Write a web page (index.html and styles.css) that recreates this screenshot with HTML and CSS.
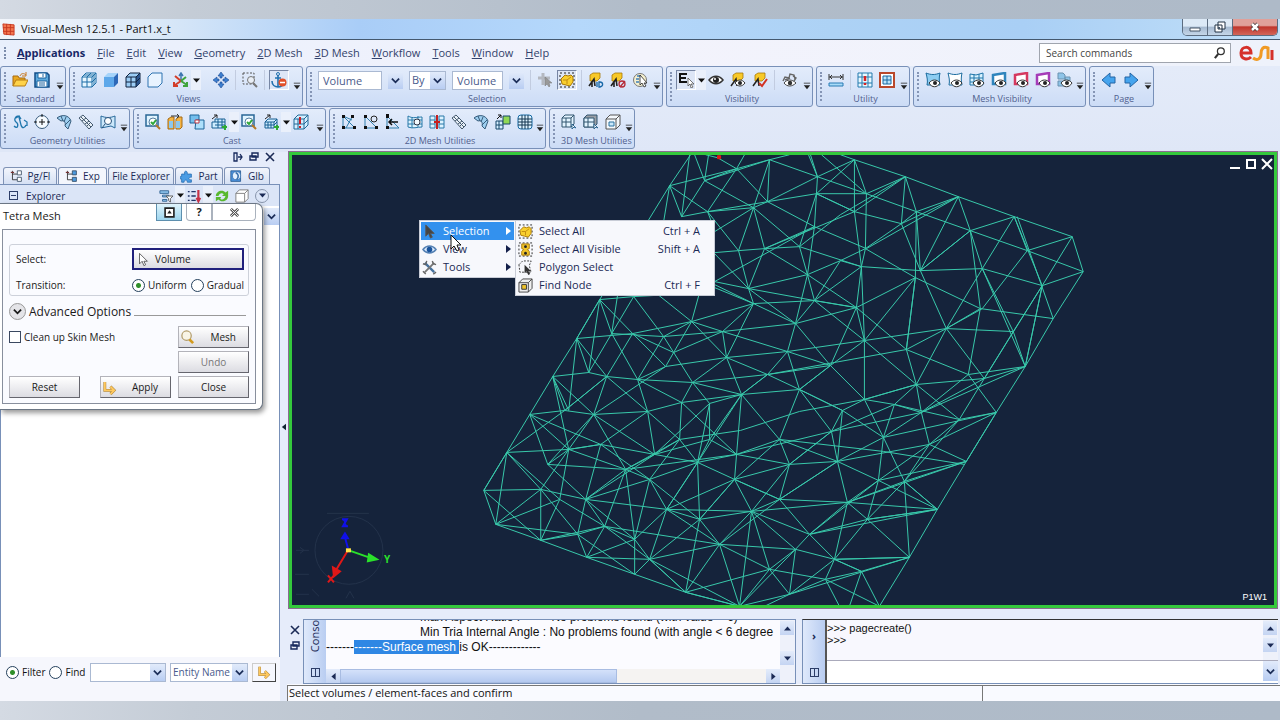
FILE: index.html
```html
<!DOCTYPE html>
<html lang="en">
  <head>
    <meta charset="UTF-8">
    <meta name="viewport" content="width=device-width, initial-scale=1.0">
    <title>Visual-Mesh 12.5.1 - Part1.x_t</title>
    <link rel="stylesheet" href="styles.css">
  </head>

  <body>
    <!-- Icon sprite -->
    <svg class="sprite" aria-hidden="true">
      <symbol id="open" viewBox="0 0 16 16"><path d="M1 14V4h5l1 2h6v3" fill="#e9a820" stroke="#a86a10"/><path d="M1 14l3-6h12l-3 6z" fill="#ffd34a" stroke="#b67c14"/><path d="M8 4c1-3 4-3 6-1M14 0v4h-4" fill="none" stroke="#c87820"/></symbol>
      <symbol id="save" viewBox="0 0 16 16"><path d="M1 1h12l2 2v12H1z" fill="#5da9dc" stroke="#124c86" stroke-width="1.5"/><path d="M4 1h8v5H4zM3 9h10v6H3z" fill="#fff" stroke="#1d64a0"/><path d="M9 2v3M5 11h6M5 13h6" stroke="#1d64a0"/></symbol>
      <symbol id="cube-wire" viewBox="0 0 16 16"><path d="M1 5l4-4h10v10l-4 4H1zM1 5h10v10M11 5l4-4M6 5v10M1 10h10l4-4M3 3h10v10M6 5l4-4" fill="#e6f6ff" stroke="#1b6da6"/></symbol>
      <symbol id="cube-solid" viewBox="0 0 16 16"><path d="M1 5h10v10H1z" fill="#5ea8ea"/><path d="M1 5l4-4h10l-4 4z" fill="#a6d4fa"/><path d="M11 5l4-4v10l-4 4z" fill="#2d68b8"/></symbol>
      <symbol id="cube-edge" viewBox="0 0 16 16"><path d="M1 5l4-4h10v10l-4 4H1z" fill="#9ccdf5" stroke="#10233e"/><path d="M11 5l4-4v10l-4 4z" fill="#2b548c"/><path d="M1 5h10v10M11 5l4-4M6 5v10M1 10h10l4-4" fill="none" stroke="#10233e"/></symbol>
      <symbol id="cube-outline" viewBox="0 0 16 16"><path d="M1 5l4-4h10v10l-4 4H1z" fill="#e8f3ff" stroke="#2c72b0"/></symbol>
      <symbol id="axes" viewBox="0 0 16 16"><path d="M8 9V2M6 4l2-3 2 3" fill="none" stroke="#3d76b0" stroke-width="1.5"/><path d="M8 9l-6 4M1 10v4h4M8 9L2 4" fill="none" stroke="#d33d2a" stroke-width="2"/><path d="M8 9l6 4M14 10v4h-4M8 9l5-4" fill="none" stroke="#3ea43c" stroke-width="2"/></symbol>
      <symbol id="move" viewBox="0 0 16 16"><path d="M8 0l3 4H9v2H7V4H5zM8 16l3-4H9v-2H7v2H5zM0 8l4-3v2h2v2H4v2zM16 8l-4-3v2h-2v2h2v2z" fill="#3d7fd0" stroke="#1c4c94" stroke-width=".6"/></symbol>
      <symbol id="zoom-box" viewBox="0 0 16 16"><path d="M1 1h11v11H1z" fill="none" stroke="#555" stroke-dasharray="2 1.5"/><circle cx="9" cy="8" r="3.5" fill="#e9eef5" stroke="#777"/><path d="M11 11l4 4" stroke="#777" stroke-width="2"/></symbol>
      <symbol id="anchor" viewBox="0 0 16 16"><path d="M7 3v12M4 6h6M1 9c0 4 3 6 6 6s5-2 6-5" fill="none" stroke="#2271ae" stroke-width="1.6"/><circle cx="7" cy="2" r="1.5" fill="none" stroke="#2271ae"/><circle cx="11.5" cy="10.5" r="4" fill="#e2502a"/><path d="M9 10.5h5" stroke="#fff" stroke-width="1.5"/></symbol>
      <symbol id="pick-off" viewBox="0 0 16 16"><path d="M6 1v12M1 6h12" stroke="#b4b8c0" stroke-width="3"/><path d="M8 5v9l2-2 2 3 1-1-1-3h3z" fill="#999" stroke="#777" stroke-width=".5"/></symbol>
      <symbol id="select-all" viewBox="0 0 16 16"><path d="M1 1h14v14H1z" fill="none" stroke="#222" stroke-dasharray="2 2"/><path d="M2 7l4-4 3 1 3-1 2 2v5l-3 4-4-1-4-1z" fill="#f9cf2e" stroke="#a97908"/><path d="M4 8h4v4M8 8l4-3" fill="none" stroke="#c28c10"/></symbol>
      <symbol id="box-id" viewBox="0 0 16 16"><path d="M2 3l3-2h7v5l-3 3H2z" fill="#f8c928" stroke="#a77808" stroke-width=".8"/><path d="M1 14l5-7 1 7M4 9v6" stroke="#222" stroke-width="1.6" fill="none"/><path d="M9 10v5M11 10v5h1c4-1 3-5 0-5z" fill="none" stroke="#1768a8" stroke-width="1.3"/></symbol>
      <symbol id="box-pick" viewBox="0 0 16 16"><path d="M2 3l3-2h7v5l-3 3H2z" fill="#f8c928" stroke="#a77808" stroke-width=".8"/><path d="M1 14l5-7 1 7M4 9v6" stroke="#222" stroke-width="1.6" fill="none"/><circle cx="12" cy="12" r="3" fill="none" stroke="#b52b38" stroke-width="1.3"/><path d="M10 15l5-6" stroke="#b52b38" stroke-width="1.3"/></symbol>
      <symbol id="circle-pick" viewBox="0 0 16 16"><circle cx="8" cy="8" r="6.5" fill="#f5f0cf" stroke="#777"/><path d="M5 4h4M4 7h3M4 10h3" stroke="#6b9bc0" stroke-width="2"/><path d="M8 3v10l2-2 2 4 2-1-2-3h3z" fill="#fff" stroke="#222" stroke-width=".8"/></symbol>
      <symbol id="e-pick" viewBox="0 0 16 16"><path d="M9 2H2v8h7M2 6h6" fill="none" stroke="#111" stroke-width="2"/><path d="M10 6v8l2-2 1 4 2-1-2-3h3z" fill="#fff" stroke="#555" stroke-width=".8"/></symbol>
      <symbol id="eye" viewBox="0 0 16 16"><path d="M1 8c4-5 10-5 14 0-4 5-10 5-14 0z" fill="#fff" stroke="#333" stroke-width="1.5"/><circle cx="8" cy="8" r="3" fill="#222"/><circle cx="7" cy="7" r="1" fill="#fff"/></symbol>
      <symbol id="box-eye" viewBox="0 0 16 16"><path d="M3 3l3-2h7v5l-3 3H3z" fill="#f8c928" stroke="#a77808" stroke-width=".8"/><path d="M1 14l5-7 1 7" stroke="#222" stroke-width="1.5" fill="none"/><path d="M5 11c3-4 7-4 10 0-3 4-7 4-10 0z" fill="#fff" stroke="#333"/><circle cx="10" cy="11" r="2" fill="#222"/></symbol>
      <symbol id="box-check" viewBox="0 0 16 16"><path d="M3 3l3-2h7v5l-3 3H3z" fill="#f8c928" stroke="#a77808" stroke-width=".8"/><path d="M1 14l5-7 1 7" stroke="#222" stroke-width="1.5" fill="none"/><path d="M7 11l3 3 5-7" fill="none" stroke="#d23324" stroke-width="2"/></symbol>
      <symbol id="eye-cycle" viewBox="0 0 16 16"><path d="M2 9l2-4 4 1 1-4 4 1 1 4M12 4l3 2-2 3M4 8l5-2" fill="none" stroke="#666" stroke-width="1.4"/><path d="M3 11c3-4 8-4 12 0-4 4-9 4-12 0z" fill="#fff" stroke="#444"/><circle cx="9" cy="11" r="2.2" fill="#333"/></symbol>
      <symbol id="measure" viewBox="0 0 16 16"><path d="M1 5h14M1 2v6M15 2v6M4 3L2 5l2 2M12 3l2 2-2 2" fill="none" stroke="#333"/><path d="M1 11h14v3H1z" fill="#a9dcf8" stroke="#287bb4"/></symbol>
      <symbol id="grid-alert" viewBox="0 0 16 16"><path d="M1 1h14v14H1zM5 1v14M11 1v14M1 5h14M1 11h14" fill="#e8f8ff" stroke="#247bae"/><path d="M8 4v5M8 11v2" stroke="#d42222" stroke-width="2.5"/></symbol>
      <symbol id="grid-frame" viewBox="0 0 16 16"><path d="M1 1h14v14H1z" fill="#fff" stroke="#b9482b" stroke-width="2"/><path d="M4 4h8v8H4zM4 8h8M8 4v8" fill="#bde5fb" stroke="#1769a3"/></symbol>
      <symbol id="grid-round" viewBox="0 0 16 16"><rect x="1" y="1" width="14" height="14" rx="3" fill="#dff3ff" stroke="#176ba5"/><path d="M5 1v14M8 1v14M11 1v14M1 5h14M1 8h14M1 11h14" stroke="#12354f"/></symbol>
      <symbol id="shape-eye" viewBox="0 0 16 16"><path d="M1 1c5 2 9 2 14 0-1 4-1 8 0 12H2c1-4 0-8-1-12z" fill="currentColor" stroke="#1b6c9f"/><path d="M4 11c3-4 8-4 11 0-3 5-8 5-11 0z" fill="#fff" stroke="#333"/><circle cx="10" cy="11" r="2" fill="#222"/></symbol>
      <symbol id="frame-eye" viewBox="0 0 16 16"><path d="M2 3l12-2v11H2z" fill="#fff" stroke="currentColor" stroke-width="2.5"/><path d="M4 11c3-4 8-4 11 0-3 5-8 5-11 0z" fill="#fff" stroke="#333"/><circle cx="10" cy="11" r="2" fill="#222"/></symbol>
      <symbol id="mesh-eye" viewBox="0 0 16 16"><path d="M1 2l6 1 7-2v12H1zM1 6h13M1 10h13M5 2v11M10 2v11" fill="#d8f2ff" stroke="#1e75a9"/><path d="M4 11c3-4 8-4 11 0-3 5-8 5-11 0z" fill="#fff" stroke="#333"/><circle cx="10" cy="11" r="2" fill="#222"/></symbol>
      <symbol id="docs-eye" viewBox="0 0 16 16"><path d="M1 1h5l2 2v4H1zM8 5h5v5H8zM1 9h6v5H1z" fill="#8ec4e8" stroke="#6a92b0"/><path d="M4 11c3-4 8-4 11 0-3 5-8 5-11 0z" fill="#fff" stroke="#333"/><circle cx="10" cy="11" r="2" fill="#222"/></symbol>
      <symbol id="prev" viewBox="0 0 16 16"><path d="M1 8l8-7v4h5v6H9v4z" fill="#45a4ee" stroke="#2464a4"/></symbol>
      <symbol id="next" viewBox="0 0 16 16"><path d="M15 8L7 1v4H2v6h5v4z" fill="#45a4ee" stroke="#2464a4"/></symbol>
      <symbol id="curve" viewBox="0 0 16 16"><path d="M2 12c4 4 5-2 2-4-3-3 1-8 3-5l2 8c1 4 4 3 5 0M4 4l3-2 2 3M12 6l3 2v4" fill="none" stroke="#2077ad" stroke-width="1.3"/></symbol>
      <symbol id="circle-node" viewBox="0 0 16 16"><circle cx="8" cy="8" r="6.5" fill="#f6fbff" stroke="#365a7a"/><path d="M8 5v6M5 8h6M8 0v3M0 8h3M13 8h3" stroke="#111"/></symbol>
      <symbol id="surface" viewBox="0 0 16 16"><path d="M1 4c5-4 12-3 14 3l-3 8-3-3c1-4-1-6-4-5z" fill="#9ecff0" stroke="#365c7c"/><path d="M5 2l2 5M10 3L8 8M14 6l-5 5" stroke="#365c7c"/></symbol>
      <symbol id="strip" viewBox="0 0 16 16"><path d="M1 4l4-3 10 10-4 4z" fill="#e8f0f7" stroke="#44596f"/><path d="M4 7l4-3M7 10l4-3M9 12l3-3M3 3l10 10" stroke="#44596f"/></symbol>
      <symbol id="lens-shape" viewBox="0 0 16 16"><path d="M1 2c5 2 9 2 14 0v12l-4-2-10 2z" fill="#cbe8fb" stroke="#27699a"/><circle cx="8" cy="7" r="3.5" fill="#fff" stroke="#27517a"/><path d="M5 10l-3 4" stroke="#27517a"/></symbol>
      <symbol id="check-lens" viewBox="0 0 16 16"><path d="M1 1h12v11H1z" fill="#e1f4ff" stroke="#2a6796" stroke-width="1.5"/><circle cx="8" cy="8" r="4" fill="#fff" stroke="#557ea0"/><path d="M6 8l2 2 3-4" fill="none" stroke="#2fa83a" stroke-width="2"/><path d="M11 11l4 4" stroke="#b57826" stroke-width="2"/></symbol>
      <symbol id="cast-box" viewBox="0 0 16 16"><path d="M1 5l3-2h3v12H1zM9 5l3-2h3v10l-2 2H9z" fill="#f4b343" stroke="#a46b16"/><path d="M2 7h4v7H2zM9 7h4v7H9z" fill="#8cc7ee"/><path d="M4 2h8M10 0l2 2-2 2" fill="none" stroke="#333"/></symbol>
      <symbol id="cast-merge" viewBox="0 0 16 16"><path d="M1 1h9v8H1z" fill="#75bfed" stroke="#1d6599"/><path d="M7 6h8v9H6z" fill="#ade0fb" stroke="#1d6599"/><path d="M6 6h4v3H6z" fill="#fff" stroke="#ba3742"/></symbol>
      <symbol id="grid-add" viewBox="0 0 16 16"><path d="M4 5h10v9H1V8h3zM4 8h10M4 11h10M7 5v9M11 5v9" fill="#d0edff" stroke="#165e92"/><path d="M1 5l5-4M3 1h3v3" fill="none" stroke="#222"/><path d="M11 13h5M14 11v5" stroke="#2eaa35" stroke-width="2"/></symbol>
      <symbol id="cube-add" viewBox="0 0 16 16"><path d="M2 8l3-3h9v6l-3 3H2zM2 8h9v6M11 8l3-3M5 8v6M8 8v6M2 11h9l3-3" fill="#d0edff" stroke="#165e92"/><path d="M2 5l5-4M4 1h3v3" fill="none" stroke="#222"/><path d="M11 13h5M14 11v5" stroke="#2eaa35" stroke-width="2"/></symbol>
      <symbol id="cube-alert" viewBox="0 0 16 16"><path d="M1 5l4-4h10v10l-4 4H1zM1 5h10v10M11 5l4-4M1 10h10l4-4M5 5v10" fill="#d4efff" stroke="#206897"/><path d="M7 3v7M7 12v2" stroke="#c92028" stroke-width="2"/></symbol>
      <symbol id="node-a" viewBox="0 0 16 16"><path d="M2 2v12h12zM2 2l9 4M5 14L11 3" fill="none" stroke="#307fad"/><path d="M1 1h3v3H1zM1 12h3v3H1zM12 12h3v3h-3zM10 1h3v3h-3z" fill="#111"/></symbol>
      <symbol id="node-b" viewBox="0 0 16 16"><path d="M2 2v12h12z" fill="none" stroke="#307fad"/><circle cx="11" cy="5" r="3" fill="none" stroke="#222"/><path d="M1 1h3v3H1zM1 12h3v3H1zM12 12h3v3h-3z" fill="#111"/></symbol>
      <symbol id="node-c" viewBox="0 0 16 16"><path d="M2 2v12h12z" fill="none" stroke="#307fad"/><path d="M5 8h8M7 5L4 8l3 3" fill="none" stroke="#111" stroke-width="1.5"/><path d="M1 0h3v4H1zM1 12h3v3H1z" fill="#111"/></symbol>
      <symbol id="mesh-join" viewBox="0 0 16 16"><path d="M1 2c5 3 9 1 14 1v10c-5 0-9 2-14 0zM1 6h14M1 10h14M5 3v11M11 2v11" fill="#ddf3ff" stroke="#2878a8"/><circle cx="10" cy="8" r="3" fill="#f2faff" stroke="#334"/></symbol>
      <symbol id="mesh-split" viewBox="0 0 16 16"><path d="M1 2h5v12H1zM10 2h5v12h-5zM1 6h5M1 10h5M10 6h5M10 10h5" fill="#ddf3ff" stroke="#2878a8"/><path d="M8 1v6M8 9v6M5 8h6" stroke="#c42020" stroke-width="2"/></symbol>
      <symbol id="mesh-new" viewBox="0 0 16 16"><path d="M1 7h7v8H1zM4 7v8M1 11h7" fill="#d5efff" stroke="#17476b"/><path d="M8 2h7v8H8z" fill="#8fd854" stroke="#17476b"/><path d="M2 5l4-4M3 1h3v3" fill="none" stroke="#111"/></symbol>
      <symbol id="cube-pin" viewBox="0 0 16 16"><path d="M1 4l3-3h9v9l-3 3H1zM1 4h9v9M10 4l3-3M5 4v9M1 8h9" fill="#e3f4ff" stroke="#31546e"/><path d="M11 10v5l2-2 2 1z" fill="#fff" stroke="#2c668f"/></symbol>
      <symbol id="cube-shade" viewBox="0 0 16 16"><path d="M1 4l3-3h10v9l-3 3H1z" fill="#9a9fa6" stroke="#31546e"/><path d="M1 4h10v9H1zM5 4v9M1 8h10" fill="#e3f4ff" stroke="#31546e"/><path d="M11 10v5l2-2 2 1z" fill="#fff" stroke="#2c668f"/></symbol>
      <symbol id="cube-inner" viewBox="0 0 16 16"><path d="M1 5l4-4h10v10l-4 4H1zM1 5h10v10M11 5l4-4" fill="#f4f8fc" stroke="#555"/><path d="M4 8h5v4H4z" fill="#c9e8fb" stroke="#2c72a0"/></symbol>
      <symbol id="cube-node" viewBox="0 0 16 16"><path d="M1 5l4-4h10v10l-4 4H1zM1 5h10v10M11 5l4-4" fill="#efefef" stroke="#444"/><path d="M4 7h5v5H4z" fill="#f2c52a" stroke="#333"/></symbol>
      <symbol id="tree" viewBox="0 0 16 16"><path d="M3 1v11h6M3 5h6" fill="none" stroke="#222"/><path d="M9 1h5v5H9zM9 9h5v5H9z" fill="currentColor" stroke="#34495f"/><path d="M1 3h4" stroke="#733" stroke-width="1.5"/></symbol>
      <symbol id="puzzle" viewBox="0 0 16 16"><path d="M2 5h4C4 1 9 0 9 4v1h5v4c-4-1-4 4 0 3v3H9c0-4-4-3-4 0H2v-4c-3 1-3-4 0-3z" fill="#4a9ce4" stroke="#2a70b4"/></symbol>
      <symbol id="globe" viewBox="0 0 16 16"><path d="M1 1h12v13H1z" fill="#4b92dc" stroke="#24568e"/><circle cx="8" cy="7" r="5" fill="#e3f1fe" stroke="#3b72ae"/><path d="M7 3c4 2 4 6 1 9" fill="none" stroke="#3b72ae" stroke-width="2"/></symbol>
      <symbol id="filter-list" viewBox="0 0 16 16"><path d="M1 2h10v3H1zM4 7h7v2H4zM4 12h5v2H4z" fill="#8dc4ef" stroke="#30618f"/><path d="M8 8h8l-3 3v4l-2-2v-2z" fill="#fff" stroke="#555"/></symbol>
      <symbol id="sort-list" viewBox="0 0 16 16"><path d="M1 3h2M5 3h5M1 8h2M5 8h5M1 13h2M5 13h5" stroke="#236" stroke-width="1.5"/><path d="M13 1v12M11 10l2 4 2-4" fill="none" stroke="#c73348" stroke-width="2.5"/></symbol>
      <symbol id="refresh" viewBox="0 0 16 16"><path d="M1 8c0-6 8-8 11-4l3-2v6H8l2-2C8 4 5 5 4 8zM15 8c0 6-8 8-11 4l-3 2V9h6l-1 2c2 2 5 1 6-3z" fill="#58b82e"/></symbol>
      <symbol id="cube-plain" viewBox="0 0 16 16"><path d="M1 5l4-4h10v10l-4 4H1zM1 5h10v10M11 5l4-4" fill="#fff" stroke="#777"/></symbol>
      <symbol id="lens" viewBox="0 0 16 16"><circle cx="7" cy="6" r="5" fill="#f8f4e6" stroke="#b09a68" stroke-width="1.3"/><path d="M10 10l4 4" stroke="#d39b1f" stroke-width="3"/></symbol>
      <symbol id="apply" viewBox="0 0 16 16"><path d="M3 2v9h9M9 7l4 4-4 4" fill="none" stroke="#a8813c" stroke-width="3"/><path d="M3 2v9h9M9 7l4 4-4 4" fill="none" stroke="#ffc95e" stroke-width="2"/></symbol>
      <symbol id="pointer" viewBox="0 0 16 16"><path d="M4 1v12l3-3 2 5 2-1-2-4h4z" fill="currentColor" stroke="#555"/></symbol>
      <symbol id="blue-eye" viewBox="0 0 16 16"><path d="M1 8c4-5 10-5 14 0-4 5-10 5-14 0z" fill="#dcecff" stroke="#5682b4" stroke-width="1.5"/><circle cx="8" cy="8" r="3" fill="#1a549c"/></symbol>
      <symbol id="tools" viewBox="0 0 16 16"><path d="M3 3l10 10" stroke="#46729e" stroke-width="2.5"/><path d="M13 3L3 13" stroke="#777" stroke-width="2"/><path d="M1 4l3 1 1-4M11 1l1 3 3 1M12 15l3-2M1 12l3 3" fill="none" stroke="#666" stroke-width="1.5"/></symbol>
      <symbol id="visible-all" viewBox="0 0 16 16"><path d="M1 1h14v14H1z" fill="none" stroke="#222" stroke-dasharray="2 2"/><path d="M4 2h8v5l-2 1 2 2v4H4v-4l2-2-2-1z" fill="#f1c42a" stroke="#a97908"/><circle cx="8" cy="5" r="1.5" fill="#222"/><circle cx="8" cy="12" r="1.5" fill="#222"/></symbol>
      <symbol id="polygon" viewBox="0 0 16 16"><path d="M1 5l4-4h9l-2 5 2 7H2z" fill="none" stroke="#333" stroke-dasharray="2 1.5"/><path d="M7 5v9l2-2 2 4 2-1-2-3h3z" fill="#333"/></symbol>
      <symbol id="chevron" viewBox="0 0 10 10"><path d="M1 3l4 4 4-4" fill="none" stroke="currentColor" stroke-width="2"/></symbol>
      <symbol id="triangle" viewBox="0 0 10 10"><path d="M0 2h10L5 8z" fill="currentColor"/></symbol>
      <symbol id="overflow" viewBox="0 0 10 10"><path d="M1 1h8v1H1zM1 4h8L5 9z" fill="#222"/></symbol>
      <symbol id="float" viewBox="0 0 10 10"><path d="M3 1h6v4H3zM1 4h6v4H1z" fill="#eef2fb" stroke="#16285c" stroke-width="1.4"/></symbol>
      <symbol id="cross" viewBox="0 0 10 10"><path d="M1 1l8 8M9 1L1 9" stroke="currentColor" stroke-width="1.6"/></symbol>
      <symbol id="dock" viewBox="0 0 10 10"><path d="M1 1h3v8H1zM5 5h4M7 2l2 3-2 3" fill="none" stroke="#16285c" stroke-width="1.3"/></symbol>
    </svg>

    <div class="screen">
      <div class="window">
        <header class="titlebar">
          <svg class="logo" viewBox="0 0 14 14"><path d="M1 1l12 1v11l-11-1zM1 5h12M1 9h12M5 1v12M9 1v12" fill="#f4764f" stroke="#c73820"/></svg>
          <h1>Visual-Mesh 12.5.1 - Part1.x_t</h1>
          <div class="window-buttons">
            <button aria-label="Minimize"><svg viewBox="0 0 14 12"><path d="M2 7h10v3H2z" fill="#fff" stroke="#456"/></svg></button>
            <button aria-label="Restore"><svg viewBox="0 0 14 12"><path d="M5 1h7v7H5zM2 4h7v7H2z" fill="#fff" stroke="#234"/><path d="M5 6h2v2H5z" fill="#456"/></svg></button>
            <button class="close" aria-label="Close"><svg viewBox="0 0 14 12"><path d="M4 3l6 6M10 3L4 9" stroke="#433" stroke-width="4"/><path d="M4 3l6 6M10 3L4 9" stroke="#fff" stroke-width="2.5"/></svg></button>
          </div>
        </header>

        <nav class="menubar">
          <span class="grip"></span>
          <a class="active" href="#"><u>A</u>pplications</a>
          <a href="#"><u>F</u>ile</a>
          <a href="#"><u>E</u>dit</a>
          <a href="#"><u>V</u>iew</a>
          <a href="#"><u>G</u>eometry</a>
          <a href="#"><u>2</u>D Mesh</a>
          <a href="#"><u>3</u>D Mesh</a>
          <a href="#"><u>W</u>orkflow</a>
          <a href="#"><u>T</u>ools</a>
          <a href="#"><u>W</u>indow</a>
          <a href="#"><u>H</u>elp</a>
          <label class="search">
            <input type="text" placeholder="Search commands" aria-label="Search commands">
            <svg viewBox="0 0 14 14"><circle cx="8" cy="5" r="4" fill="none" stroke="#333" stroke-width="1.5"/><path d="M5 8l-4 5" stroke="#333" stroke-width="2.5"/></svg>
          </label>
          <svg class="brand" viewBox="0 0 36 18"><path d="M2 9h10c0-8-10-7-10 0 0 7 7 7 10 4" fill="none" stroke="#d5302a" stroke-width="3"/><path d="M14 14c4 3 8 1 8-4s2-8 7-6v11" fill="none" stroke="#f09a25" stroke-width="3"/><path d="M33 6v10" stroke="#d5302a" stroke-width="3"/></svg>
        </nav>

        <div class="toolbars">
          <div class="toolbar-row">
            <section class="group standard">
              <div class="tools">
                <button aria-label="Open"><svg><use href="#open"/></svg></button>
                <button aria-label="Save"><svg><use href="#save"/></svg></button>
              </div>
              <h2>Standard</h2>
              <button class="more" aria-label="More"><svg><use href="#overflow"/></svg></button>
            </section>
            <section class="group views">
              <div class="tools">
                <button aria-label="Wireframe"><svg><use href="#cube-wire"/></svg></button>
                <button aria-label="Shaded"><svg><use href="#cube-solid"/></svg></button>
                <button aria-label="Shaded with edges"><svg><use href="#cube-edge"/></svg></button>
                <button aria-label="Outline"><svg><use href="#cube-outline"/></svg></button>
                <button class="axes" aria-label="Axes"><svg><use href="#axes"/></svg></button>
                <button class="drop" aria-label="Axes list"><svg><use href="#triangle"/></svg></button>
                <span class="separator clear"></span>
                <button aria-label="Pan"><svg><use href="#move"/></svg></button>
                <span class="separator"></span>
                <button aria-label="Zoom"><svg><use href="#zoom-box"/></svg></button>
                <span class="separator"></span>
                <button class="pressed" aria-label="Anchor"><svg><use href="#anchor"/></svg></button>
              </div>
              <h2>Views</h2>
              <button class="more" aria-label="More"><svg><use href="#overflow"/></svg></button>
            </section>
            <section class="group selection">
              <div class="tools">
                <input class="entity" type="text" value="Volume" aria-label="Entity">
                <button class="pick" aria-label="Entity list"><svg><use href="#chevron"/></svg></button>
                <span class="combo by"><select aria-label="Mode"><option>By</option></select><svg><use href="#chevron"/></svg></span>
                <input class="target" type="text" value="Volume" aria-label="Target">
                <button class="pick" aria-label="Target list"><svg><use href="#chevron"/></svg></button>
                <span class="separator"></span>
                <button aria-label="Add pick"><svg><use href="#pick-off"/></svg></button>
                <button class="pressed" aria-label="Select all"><svg><use href="#select-all"/></svg></button>
                <span class="separator"></span>
                <button aria-label="Select by ID"><svg><use href="#box-id"/></svg></button>
                <button aria-label="Select by pick"><svg><use href="#box-pick"/></svg></button>
                <button aria-label="Select by circle"><svg><use href="#circle-pick"/></svg></button>
              </div>
              <h2>Selection</h2>
              <button class="more" aria-label="More"><svg><use href="#overflow"/></svg></button>
            </section>
            <section class="group visibility">
              <div class="tools">
                <button class="pressed" aria-label="Element pick"><svg><use href="#e-pick"/></svg></button>
                <button class="drop" aria-label="Element list"><svg><use href="#triangle"/></svg></button>
                <button aria-label="Show"><svg><use href="#eye"/></svg></button>
                <button aria-label="Show part"><svg><use href="#box-eye"/></svg></button>
                <button aria-label="Check part"><svg><use href="#box-check"/></svg></button>
                <span class="separator"></span>
                <button aria-label="Reverse"><svg><use href="#eye-cycle"/></svg></button>
              </div>
              <h2>Visibility</h2>
              <button class="more" aria-label="More"><svg><use href="#overflow"/></svg></button>
            </section>
            <section class="group utility">
              <div class="tools">
                <button aria-label="Measure"><svg><use href="#measure"/></svg></button>
                <span class="separator"></span>
                <button aria-label="Check mesh"><svg><use href="#grid-alert"/></svg></button>
                <button aria-label="Frame mesh"><svg><use href="#grid-frame"/></svg></button>
              </div>
              <h2>Utility</h2>
              <button class="more" aria-label="More"><svg><use href="#overflow"/></svg></button>
            </section>
            <section class="group mesh-visibility">
              <div class="tools">
                <button class="sky" aria-label="Surfaces"><svg><use href="#shape-eye"/></svg></button>
                <button class="white" aria-label="Faces"><svg><use href="#shape-eye"/></svg></button>
                <button aria-label="Mesh"><svg><use href="#mesh-eye"/></svg></button>
                <button class="blue" aria-label="Edges"><svg><use href="#frame-eye"/></svg></button>
                <button class="crimson" aria-label="Red frame"><svg><use href="#frame-eye"/></svg></button>
                <button class="violet" aria-label="Violet frame"><svg><use href="#frame-eye"/></svg></button>
                <button aria-label="Pages"><svg><use href="#docs-eye"/></svg></button>
              </div>
              <h2>Mesh Visibility</h2>
              <button class="more" aria-label="More"><svg><use href="#overflow"/></svg></button>
            </section>
            <section class="group page">
              <div class="tools">
                <button aria-label="Previous"><svg><use href="#prev"/></svg></button>
                <button aria-label="Next"><svg><use href="#next"/></svg></button>
              </div>
              <h2>Page</h2>
              <button class="more" aria-label="More"><svg><use href="#overflow"/></svg></button>
            </section>
          </div>

          <div class="toolbar-row">
            <section class="group geometry">
              <div class="tools">
                <button aria-label="Curve"><svg><use href="#curve"/></svg></button>
                <button aria-label="Circle"><svg><use href="#circle-node"/></svg></button>
                <button aria-label="Surface"><svg><use href="#surface"/></svg></button>
                <button aria-label="Strip"><svg><use href="#strip"/></svg></button>
                <button aria-label="Inspect"><svg><use href="#lens-shape"/></svg></button>
              </div>
              <h2>Geometry Utilities</h2>
              <button class="more" aria-label="More"><svg><use href="#overflow"/></svg></button>
            </section>
            <section class="group cast">
              <div class="tools">
                <button aria-label="Check"><svg><use href="#check-lens"/></svg></button>
                <button aria-label="Box"><svg><use href="#cast-box"/></svg></button>
                <button aria-label="Merge"><svg><use href="#cast-merge"/></svg></button>
                <button aria-label="Add mesh"><svg><use href="#grid-add"/></svg></button>
                <button class="drop" aria-label="Mesh list"><svg><use href="#triangle"/></svg></button>
                <button aria-label="Check mesh"><svg><use href="#check-lens"/></svg></button>
                <button aria-label="Add volume"><svg><use href="#cube-add"/></svg></button>
                <button class="drop" aria-label="Volume list"><svg><use href="#triangle"/></svg></button>
                <button aria-label="Volume check"><svg><use href="#cube-alert"/></svg></button>
              </div>
              <h2>Cast</h2>
              <button class="more" aria-label="More"><svg><use href="#overflow"/></svg></button>
            </section>
            <section class="group mesh-2d">
              <div class="tools">
                <button aria-label="Node"><svg><use href="#node-a"/></svg></button>
                <button aria-label="Rotate node"><svg><use href="#node-b"/></svg></button>
                <button aria-label="Move node"><svg><use href="#node-c"/></svg></button>
                <button aria-label="Join"><svg><use href="#mesh-join"/></svg></button>
                <button aria-label="Split"><svg><use href="#mesh-split"/></svg></button>
                <button aria-label="Strip"><svg><use href="#strip"/></svg></button>
                <button aria-label="Surface"><svg><use href="#surface"/></svg></button>
                <button aria-label="New mesh"><svg><use href="#mesh-new"/></svg></button>
                <button aria-label="Grid"><svg><use href="#grid-round"/></svg></button>
              </div>
              <h2>2D Mesh Utilities</h2>
              <button class="more" aria-label="More"><svg><use href="#overflow"/></svg></button>
            </section>
            <section class="group mesh-3d">
              <div class="tools">
                <button aria-label="Cube wire"><svg><use href="#cube-pin"/></svg></button>
                <button aria-label="Cube faces"><svg><use href="#cube-shade"/></svg></button>
                <button aria-label="Cube inside"><svg><use href="#cube-inner"/></svg></button>
              </div>
              <h2>3D Mesh Utilities</h2>
              <button class="more" aria-label="More"><svg><use href="#overflow"/></svg></button>
            </section>
          </div>
        </div>

        <div class="workspace">
          <aside class="sidebar">
            <div class="dock-buttons">
              <button aria-label="Dock"><svg><use href="#dock"/></svg></button>
              <button aria-label="Float"><svg><use href="#float"/></svg></button>
              <button aria-label="Close panel"><svg><use href="#cross"/></svg></button>
            </div>
            <div class="tabs">
              <button class="tab tab-page"><svg><use href="#tree"/></svg>Pg/Fl</button>
              <button class="tab tab-exp selected"><svg><use href="#tree"/></svg>Exp</button>
              <button class="tab tab-files">File Explorer</button>
              <button class="tab tab-part"><svg><use href="#puzzle"/></svg>Part</button>
              <button class="tab tab-global"><svg><use href="#globe"/></svg>Glb</button>
            </div>
            <div class="explorer-head">
              <span class="collapse"></span>
              <span class="explorer-title">Explorer</span>
              <button aria-label="Filter"><svg><use href="#filter-list"/></svg></button>
              <button class="drop" aria-label="Filter list"><svg><use href="#triangle"/></svg></button>
              <button aria-label="Sort"><svg><use href="#sort-list"/></svg></button>
              <button class="drop" aria-label="Sort list"><svg><use href="#triangle"/></svg></button>
              <button aria-label="Refresh"><svg><use href="#refresh"/></svg></button>
              <button aria-label="Model"><svg><use href="#cube-plain"/></svg></button>
              <button class="round" aria-label="Options"><svg><use href="#triangle"/></svg></button>
            </div>
            <div class="tree-pane">
              <button class="pick" aria-label="Expand"><svg><use href="#chevron"/></svg></button>
            </div>
            <div class="filter-bar">
              <label><input type="radio" name="find" checked>Filter</label>
              <label><input type="radio" name="find">Find</label>
              <span class="combo filter-value"><select aria-label="Filter value"><option></option></select><svg><use href="#chevron"/></svg></span>
              <span class="combo filter-type"><select aria-label="Filter type"><option>Entity Name</option></select><svg><use href="#chevron"/></svg></span>
              <button class="go" aria-label="Apply filter"><svg><use href="#apply"/></svg></button>
            </div>

            <!-- Floating dialog over the explorer -->
            <form class="dialog">
              <div class="dialog-title">
                <h2>Tetra Mesh</h2>
                <button type="button" class="roll" aria-label="Roll up"><svg viewBox="0 0 10 10"><path d="M1 1h8v8H1z" fill="#fff" stroke="#222" stroke-width="1.5"/><path d="M3 6h4L5 3z" fill="#222"/></svg></button>
                <button type="button" class="help" aria-label="Help">?</button>
                <button type="button" class="shut" aria-label="Close dialog"><svg viewBox="0 0 10 10"><path d="M1 1l8 8M9 1L1 9" stroke="#555" stroke-width="3"/><path d="M1 1l8 8M9 1L1 9" stroke="#fff"/></svg></button>
              </div>
              <div class="dialog-body">
                <div class="options">
                  <span>Select:</span>
                  <button type="button" class="volume"><svg><use href="#pointer"/></svg>Volume</button>
                  <span>Transition:</span>
                  <div class="radios">
                    <label><input type="radio" name="transition" checked>Uniform</label>
                    <label><input type="radio" name="transition">Gradual</label>
                  </div>
                </div>
                <div class="advanced">
                  <button type="button" aria-label="Expand advanced options"><svg><use href="#chevron"/></svg></button>
                  <h3>Advanced Options</h3>
                </div>
                <div class="actions">
                  <label class="clean"><input type="checkbox">Clean up Skin Mesh</label>
                  <button type="button" class="mesh with-icon"><svg><use href="#lens"/></svg>Mesh</button>
                  <button type="button" class="undo" disabled>Undo</button>
                  <button type="reset" class="reset">Reset</button>
                  <button type="button" class="with-icon"><svg><use href="#apply"/></svg>Apply</button>
                  <button type="button">Close</button>
                </div>
              </div>
            </form>
          </aside>

          <div class="splitter"><svg viewBox="0 0 6 8"><path d="M6 0v8L1 4z" fill="#123"/></svg></div>

          <div class="main">
            <main class="viewport">
              <svg class="scene" viewBox="292 155 983 451" preserveAspectRatio="xMidYMid slice">
                <!-- outline -->
                <path class="wire" d="M691 155L670 186 600 300 577 339 553 377 530 415 507 453 484 491 496 525 541 541 587 558 635 575 686 593 740 607M841 155L855 160 906 177 959 197 1015 217 1073 237 1084 272 1054 319 1026 367 997 413 967 462 938 510 910 558 880 607"/>
                <!-- upper left -->
                <path class="wire" d="M690 155L682 217M695 155L705 181 682 217 670 186 708 212 739 251 754 208 705 181 770 160 737 169 670 186 664 222M709 155L705 181 737 169 718 158 706 155M737 169L768 202 754 208 708 212 737 169 745 155M770 160L768 202 817 194M770 160L754 208 765 249 739 251 715 253M770 160L818 177 768 202 815 227 765 249 749 289 739 251M682 217L708 212 768 202M754 208L715 232M754 208L800 247 765 249 808 275 749 289 715 254M708 212L715 230M815 227L715 282 749 289 754 304 815 301 749 289M754 304L692 322 633 334 577 339 600 300 634 297 690 294M754 304L796 324 723 332 664 337 612 334M754 304L723 332 692 322 700 293M754 304L715 288"/>
                <path class="wire" d="M600 300L612 334 638 380 664 337 634 297 612 334 618 295M600 300L589 373 577 339 607 377 633 334 674 353 723 332 727 358 693 383 664 337 692 322 674 353 666 367 638 380 607 377 589 373 553 377M600 300L633 334 666 367 727 358 788 352 831 366M577 339L569 411 553 377 565 411 607 377M612 334L589 373M692 322L727 358 768 375 788 352 723 332M796 324L857 308 815 301 796 324 788 352M749 289L796 324 831 366 768 375 693 383 638 380M754 304L727 358 742 395M652 290L692 322M715 285L754 304"/>
                <!-- upper right -->
                <path class="wire" d="M770 160L790 155M811 155L818 177 817 194 815 227 808 275 800 247 817 194 867 194 855 160 818 177M809 155L818 177 867 194 917 212 971 231 1028 251 1084 272 1043 286 983 269 921 271 862 267 800 247M822 155L867 194 906 177 855 212 817 194 855 160 855 212 862 267 866 249 867 194M855 212L902 224 906 177 917 212 902 224 959 197 867 249 815 227M906 177L841 215 800 247M817 194L855 212 765 249M959 197L917 212 916 278M959 197L971 231 983 269 1015 217 971 231 921 271 959 197M1015 217L1028 251 1073 237 1043 286 1015 217M1018 217L1054 319M1028 251L983 309 947 329 921 271 902 224M917 212L921 271 971 231M971 231L981 309 969 375M866 249L916 278 981 309 1054 319M866 249L841 261 808 275 857 308 862 267 841 261 815 301 808 275 796 324M866 249L902 224M983 269L1026 367 1043 286 1026 367M983 269L947 329 1014 332 1043 286M983 269L1014 332 1026 367M1043 286L985 379M916 278L857 308 865 341 862 267 815 301 857 308 907 350 916 278 865 341 831 366 857 308M916 278L907 350 947 329 981 309M815 301L865 341 917 385 907 350 969 375 1026 367 985 379 917 385 947 329 985 379 1014 332M865 341L788 352M865 341L947 329M768 375L907 350M865 341L865 400"/>
                <!-- middle band -->
                <path class="wire" d="M553 377L594 415 565 411 530 415 569 450 553 377M507 453L565 411 607 377 594 415 648 412 638 380 682 403 693 383 710 404 742 395 768 375 800 390 831 366 865 400 917 385 895 405 865 400 843 411 800 390 742 395 682 403 648 412 607 377M693 383L742 395 710 440 710 404 655 455 594 415 666 367M768 375L742 395 780 440 800 390 832 432 843 411 884 438 895 405 922 413 917 385 960 420 985 379 922 413 969 375 997 413 960 420 895 405 832 432M831 366L800 390M865 400L800 412 741 431 680 440 655 455 601 445 569 450 507 453M1026 367L922 413 832 432 737 455 626 470M917 385L865 400 884 438 922 413 930 445 997 413 884 438M648 412L680 440 682 403 737 455 742 395M788 352L800 390 843 411"/>
                <path class="wire" d="M530 415L548 465 569 450 541 490 507 453 484 491 541 490 496 525 507 453 560 500 569 450 601 445 586 500 548 465 594 415 569 450 626 470 655 455 648 412 601 445M594 415L626 470 680 440 650 480 586 500 541 490M530 415L601 445 650 480 698 463 710 440 655 455 698 463 737 455 780 440 790 465 832 432 838 462 884 438 879 481 930 445 967 462 905 482 884 438M710 440L737 455 735 480 790 465 737 455M680 440L698 463 735 480 780 440 838 462 879 481 967 462 997 413M832 432L790 465 838 462 930 445M960 420L930 445 905 482 938 510 879 481M965 465L884 452 780 440"/>
                <!-- lower band -->
                <path class="wire" d="M484 491L541 541 541 490 578 535 496 525 560 500 541 541 605 527 586 500 578 535 587 558 605 527 635 540 626 470 605 527 560 500M586 500L635 540 650 480 667 510 698 463 700 520 735 480 752 512 790 465 780 500 838 462 848 503 879 481 868 520 905 482 910 558M626 470L586 500 667 510 635 540 587 558M650 480L700 520 667 510 720 545 752 512 700 520 650 560 635 540 635 575 578 535M698 463L667 510 650 560 686 593 720 545 650 560 635 575M735 480L780 500 848 503 868 520 938 510 848 503 810 535 780 500 752 512 810 535 835 560 868 520 910 558 835 560 796 550 810 535 868 520M667 510L752 512 848 503 967 462M780 500L720 545 796 550 752 512 770 570 720 545 740 607 770 570 796 550 790 595 835 560 826 580 790 595 740 607 686 593 770 570 826 580 862 572 835 560 910 558 862 572 880 607 826 580 840 607M910 558L790 595M686 593L650 560 740 607M770 570L790 595 765 607M862 572L850 607M735 480L700 520 686 593M848 503L835 560 862 572"/>
                <path class="wire" d="M578 535L605 527 720 545M605 527L650 560M541 541L578 535M587 558L650 560M700 520L720 545M938 510L868 520M938 510L905 482 848 503M938 510L810 535M752 512L740 607M796 550L740 607M879 481L810 535M838 462L780 500 735 480 667 510M650 480L626 470 548 465M655 455L586 500M710 404L698 463M742 395L698 463M843 411L838 462M960 420L905 482"/>
                <path class="origin" d="M718 156h3v3h-3z"/>
                <!-- axis triad -->
                <g class="dial"><circle cx="349" cy="551" r="34"/><path d="M296 551h13M295 575h14M296 595h13M312 590l7 7M346 599l4-7 4 7M327 514h42M300 548l4 3-4 3"/></g>
                <path class="axis-z" d="M348 549l-3-11m-3 1h6l-3-5zM342 520h5l-4 7h5"/>
                <path class="axis-x" d="M348 551l-12 20m-3-3l7 4-6 5zM328 576l6 7m0-7l-6 7"/>
                <path class="axis-y" d="M349 551l20 7m0-3l8 5-9 2z"/>
                <path class="axis-hub" d="M346 549h5v4h-5z"/>
                <text class="axis-label" x="384" y="564">Y</text>
              </svg>
              <div class="view-buttons">
                <button aria-label="Minimize view"><svg viewBox="0 0 12 12"><path d="M1 10h10" stroke="#fff" stroke-width="2"/></svg></button>
                <button aria-label="Maximize view"><svg viewBox="0 0 12 12"><path d="M2 2h8v8H2z" fill="none" stroke="#fff" stroke-width="2"/></svg></button>
                <button aria-label="Close view"><svg viewBox="0 0 12 12"><path d="M1 1l10 10M11 1L1 11" stroke="#fff" stroke-width="2"/></svg></button>
              </div>
              <span class="view-name">P1W1</span>

              <div class="context-menu">
                <button class="highlight dark-pointer"><svg><use href="#pointer"/></svg><span>Selection</span><i></i></button>
                <button><svg><use href="#blue-eye"/></svg><span>View</span><i></i></button>
                <button><svg><use href="#tools"/></svg><span>Tools</span><i></i></button>
              </div>
              <div class="context-menu submenu">
                <button><svg><use href="#select-all"/></svg><span>Select All</span><kbd>Ctrl + A</kbd></button>
                <button><svg><use href="#visible-all"/></svg><span>Select All Visible</span><kbd>Shift + A</kbd></button>
                <button><svg><use href="#polygon"/></svg><span>Polygon Select</span></button>
                <button><svg><use href="#cube-node"/></svg><span>Find Node</span><kbd>Ctrl + F</kbd></button>
              </div>
              <svg class="cursor" viewBox="0 0 12 18"><path d="M1 1v14l3-3 3 5 2-1-2-5h4z" fill="#fff" stroke="#111"/></svg>
            </main>

            <div class="docks">
              <div class="dock-side">
                <button aria-label="Close console"><svg><use href="#cross"/></svg></button>
                <button aria-label="Float console"><svg><use href="#float"/></svg></button>
              </div>
              <section class="console">
                <div class="dock-tab"><span>Conso</span><i></i></div>
                <div class="console-main">
                  <div class="console-log">
                    <p class="indent first"><span>Max Aspect Ratio :</span> No problems found (with value &gt; 6)</p>
                    <p class="indent">Min Tria Internal Angle : No problems found (with angle &lt; 6 degree</p>
                    <p>-------<mark>-------Surface mesh </mark>is OK-------------</p>
                  </div>
                  <div class="hscroll">
                    <button class="left" aria-label="Scroll left"><svg><use href="#triangle"/></svg></button>
                    <span class="thumb"></span>
                    <button class="right" aria-label="Scroll right"><svg><use href="#triangle"/></svg></button>
                  </div>
                </div>
                <div class="vscroll">
                  <button class="up" aria-label="Scroll up"><svg><use href="#triangle"/></svg></button>
                  <button aria-label="Scroll down"><svg><use href="#triangle"/></svg></button>
                </div>
              </section>
              <section class="command">
                <div class="dock-tab"><b>›</b><i></i></div>
                <div class="command-main">
                  <div class="command-log">
                    <p>&gt;&gt;&gt; pagecreate()<br>&gt;&gt;&gt;</p>
                    <div class="vscroll">
                      <button class="up" aria-label="Scroll up"><svg><use href="#triangle"/></svg></button>
                      <button aria-label="Scroll down"><svg><use href="#triangle"/></svg></button>
                    </div>
                  </div>
                  <div class="command-line">
                    <input type="text" aria-label="Command">
                    <button class="pick" aria-label="History"><svg><use href="#chevron"/></svg></button>
                  </div>
                </div>
              </section>
            </div>

            <footer class="status">
              <span>Select volumes / element-faces and confirm</span>
              <span></span>
            </footer>
          </div>
        </div>
      </div>
    </div>
  </body>
</html>
```

FILE: styles.css
```css
* {
  box-sizing: border-box;
}

body {
  margin: 0;
  font-family: "Open Sans", "Noto Sans", sans-serif;
  font-size: 11px;
  line-height: 14px;
  color: #1b2a55;
}

h1, h2, h3, p {
  margin: 0;
  font-weight: normal;
}

button, input, select {
  margin: 0;
  padding: 0;
  border: none;
  background: none;
  font: inherit;
  color: inherit;
}

button {
  display: flex;
  align-items: center;
  justify-content: center;
  flex: none;
}

svg {
  display: block;
  flex: none;
}

.sprite {
  position: absolute;
  width: 0;
  height: 0;
}

.screen {
  min-height: 100vh;
  display: flex;
  flex-direction: column;
  padding: 19px 0;
  background: linear-gradient(90deg, #d4dae3, #c4ccd6 15%, #b1bcc9 50%, #aebac8);
}

.window {
  flex: 1;
  display: flex;
  flex-direction: column;
  background: #e6ecfa;
}

/* Title bar */
.titlebar {
  display: flex;
  align-items: center;
  gap: 6px;
  height: 21px;
  padding-left: 2px;
  border-bottom: 1px solid #44586e;
  background: linear-gradient(90deg, #f1f5fb, #dbe9f8 12%, #a9cdf7 28%, #b5d8fb 45%, #add2f5 65%, #a9cff5 80%, #c1dff8);
}

.logo {
  width: 13px;
  height: 13px;
}

.titlebar h1 {
  font-size: 11px;
  color: #111;
}

.window-buttons {
  display: flex;
  align-self: flex-start;
  margin-left: auto;
  margin-right: 2px;
  border: 1px solid #5c6c80;
  border-top: none;
  border-radius: 0 0 5px 5px;
  overflow: hidden;
}

.window-buttons button {
  width: 25px;
  height: 16px;
  border-right: 1px solid #5c6c80;
  background: linear-gradient(#dce9f6 45%, #a5b9d0 50%, #c5d6e8);
}

.window-buttons .close {
  width: 44px;
  border-right: none;
  background: linear-gradient(#e0a09a 40%, #c0352c 50%, #d2665a);
}

.window-buttons svg {
  width: 14px;
  height: 12px;
}

/* Menu */
.menubar {
  display: flex;
  align-items: center;
  gap: 12px;
  height: 26px;
  padding: 0 5px 0 4px;
  background: linear-gradient(90deg, #e8effc, #f3f3fc 50%, #eef2fb);
}

.menubar a {
  color: #33426b;
  text-decoration: none;
}

.menubar .active {
  color: #172766;
  font-weight: bold;
}

.grip {
  width: 2px;
  height: 12px;
  margin-right: -1px;
  border-left: 2px dotted #7c8cab;
}

.search {
  width: 192px;
  height: 20px;
  margin-left: auto;
  padding: 0 4px 0 6px;
  border: 1px solid #a0a5ae;
  background: #fff;
}

.search input {
  flex: 1;
  min-width: 0;
  font-size: 10px;
}

.search input::placeholder {
  color: #444;
}

.search svg {
  width: 12px;
  height: 12px;
}

.brand {
  width: 36px;
  height: 18px;
  margin-left: -4px;
}

/* Toolbars */
.toolbars {
  display: flex;
  flex-direction: column;
  gap: 1px;
  padding-bottom: 3px;
  background: linear-gradient(#e4ebf9, #dfe7f7);
}

.toolbar-row {
  display: flex;
  gap: 3px;
}

.group {
  position: relative;
  height: 41px;
  padding-left: 11px;
  border: 1px solid #7890b8;
  border-radius: 3px;
  background: linear-gradient(#e3ecfb, #ccdcf6);
}

.group::before {
  content: "";
  position: absolute;
  left: 3px;
  top: 5px;
  bottom: 5px;
  border-left: 2px dotted #8595b5;
}

.group h2 {
  margin-right: 6px;
  font-size: 9px;
  line-height: 12px;
  text-align: center;
  white-space: nowrap;
  color: #50608e;
}

.standard { width: 66px; }
.views { width: 234px; }
.selection { width: 357px; }
.visibility { width: 147px; }
.utility { width: 94px; }
.mesh-visibility { width: 173px; }
.page { width: 65px; }
.geometry { width: 130px; }
.cast { width: 193px; }
.mesh-2d { width: 217px; }
.mesh-3d { width: 86px; }

.tools {
  display: flex;
  align-items: center;
  gap: 6px;
  height: 26px;
}

.tools svg {
  width: 16px;
  height: 16px;
}

.drop {
  width: 10px;
  height: 20px;
  margin: 0 -4px;
  background: #eaf0fb;
  color: #111;
}

.tools .drop svg,
.drop svg {
  width: 7px;
  height: 7px;
}

.axes {
  margin-left: 4px;
}

.more {
  position: absolute;
  right: 1px;
  bottom: 16px;
}

.more svg {
  width: 8px;
  height: 8px;
}

.separator {
  width: 1px;
  height: 20px;
  background: #c2cce0;
}

.clear {
  width: 4px;
  background: none;
}

.pressed {
  width: 20px;
  height: 20px;
  margin: 0 -2px;
  border: 1px solid #7786a4;
  border-right-color: #fff;
  border-bottom-color: #fff;
  background: #dde6f6;
}

.sky { color: #8dcdf2; }
.white { color: #fff; }
.blue { color: #2f85bd; }
.crimson { color: #d5385f; }
.violet { color: #a53cb8; }

.tools input,
.combo {
  height: 19px;
  border: 1px solid #aab9d2;
  background: #fff;
  color: #4a5b8c;
}

.tools input {
  padding-left: 4px;
}

.entity { width: 64px; }
.target { width: 51px; }

.combo {
  display: flex;
  align-items: center;
  position: relative;
}

.combo select {
  appearance: none;
  width: 100%;
  height: 100%;
  padding-left: 2px;
}

.combo svg,
.pick {
  width: 15px;
  height: 17px;
  background: linear-gradient(#e2ebfb, #b8cdf2);
  color: #1b2d58;
}

.combo svg {
  position: absolute;
  right: 0;
  padding: 3px;
  pointer-events: none;
}

.tools .combo svg {
  width: 15px;
  height: 17px;
}

.tools .pick svg,
.pick svg {
  width: 9px;
  height: 9px;
}

.by { width: 37px; }

/* Workspace */
.workspace {
  flex: 1;
  display: flex;
  min-height: 0;
}

.sidebar {
  position: relative;
  flex: none;
  display: flex;
  flex-direction: column;
  width: 280px;
  font-size: 10px;
}

.dock-buttons {
  display: flex;
  justify-content: flex-end;
  gap: 6px;
  padding: 0 5px 5px;
}

.dock-buttons svg {
  width: 10px;
  height: 10px;
}

.tabs {
  display: flex;
  gap: 1px;
  padding-left: 3px;
  border-bottom: 1px solid #7890b8;
}

.tab {
  gap: 5px;
  height: 17px;
  border: 1px solid #7f92b5;
  border-bottom: none;
  border-radius: 3px 3px 0 0;
  background: linear-gradient(#f2f5fc, #d5e0f4);
  white-space: nowrap;
}

.tab svg {
  width: 13px;
  height: 13px;
}

.tab-page { width: 54px; }
.tab-exp { width: 49px; }
.tab-files { width: 66px; }
.tab-part { width: 48px; }
.tab-global { width: 46px; }

.tab-page svg { color: #fff; }
.tab-exp svg { color: #4c9ade; }

.selected {
  background: #f3f6fd;
}

.explorer-head {
  display: flex;
  align-items: center;
  gap: 6px;
  height: 21px;
  padding: 0 10px 0 9px;
  border-right: 1px solid #7890b8;
  background: #dbe5f7;
}

.explorer-title {
  margin-left: 2px;
  margin-right: auto;
}

.explorer-head svg {
  width: 14px;
  height: 14px;
}

.explorer-head .drop svg {
  width: 7px;
  height: 7px;
}

.explorer-head .round {
  width: 14px;
  height: 14px;
  border: 1px solid #8895ac;
  border-radius: 50%;
}

.explorer-head .round svg {
  width: 7px;
  height: 7px;
}

.collapse {
  display: flex;
  align-items: center;
  width: 9px;
  height: 9px;
  padding: 1px;
  border: 1px solid #2c3d68;
}

.collapse::before {
  content: "";
  width: 100%;
  height: 1px;
  background: #2c3d68;
}

.tree-pane {
  flex: 1;
  display: flex;
  align-items: flex-start;
  justify-content: flex-end;
  padding-top: 2px;
  border: 1px solid #7890b8;
  border-top: none;
  border-bottom: none;
  background: #fff;
}

.filter-bar {
  display: flex;
  align-items: center;
  gap: 4px;
  height: 44px;
  padding: 0 4px 14px 6px;
  background: #f6f7fd;
  color: #111;
}

label {
  display: flex;
  align-items: center;
  gap: 3px;
}

input[type="radio"] {
  appearance: none;
  width: 13px;
  height: 13px;
  border: 1px solid #24405c;
  border-radius: 50%;
  background: #fff;
}

input[type="radio"]:checked {
  background: radial-gradient(circle, #2f8f2a 2px, #fff 3px);
}

.filter-value {
  width: 76px;
  margin-left: auto;
}

.filter-type {
  width: 78px;
}

.go {
  width: 24px;
  height: 19px;
  border: 1px solid #ccc;
  border-right-color: #444;
  border-bottom-color: #444;
}

.go svg {
  width: 14px;
  height: 14px;
}

/* Tetra Mesh dialog */
.dialog {
  position: absolute;
  left: 0;
  top: 51px;
  width: 263px;
  padding: 0 6px 5px 2px;
  border: 1px solid #6b7684;
  border-left: none;
  border-radius: 0 7px 7px 0;
  background: #fff;
  box-shadow: 2px 3px 5px rgba(0, 0, 0, 0.4);
  color: #1a1a1a;
}

.dialog-title {
  display: flex;
  align-items: flex-start;
  height: 25px;
}

.dialog-title h2 {
  flex: 1;
  padding: 5px 1px;
  font-size: 11px;
}

.dialog-title button {
  height: 17px;
  border: 1px solid #aab2bd;
  border-top: none;
}

.dialog-title svg {
  width: 11px;
  height: 11px;
}

.dialog-title .roll {
  width: 26px;
  margin-right: 4px;
  border-color: #5d8fae;
  background: linear-gradient(#e0f4fc, #9dd5ee);
}

.help {
  width: 26px;
  border-radius: 0 0 0 4px;
  font-size: 11px;
  font-weight: bold;
}

.shut {
  width: 44px;
  border-radius: 0 0 4px 0;
}

.dialog-title .shut svg {
  width: 9px;
  height: 9px;
}

.dialog-body {
  padding: 14px 6px 5px;
  border: 1px solid #888f9d;
  background: #fafbff;
}

.options {
  display: grid;
  grid-template-columns: 116px 1fr;
  align-items: center;
  row-gap: 8px;
  padding: 3px 4px 3px 6px;
  border: 1px solid #cdd1da;
  border-radius: 3px;
}

.volume {
  justify-content: flex-start;
  gap: 5px;
  height: 22px;
  padding-left: 2px;
  border: 2px solid #20207c;
  background: linear-gradient(#fff, #dddde2);
}

.volume svg {
  width: 14px;
  height: 15px;
  color: #fff;
}

.radios {
  display: flex;
  justify-content: space-between;
}

.advanced {
  display: flex;
  align-items: center;
  gap: 3px;
  padding: 7px 3px 6px 0;
}

.advanced button {
  width: 17px;
  height: 17px;
  border: 1px solid #999;
  border-radius: 50%;
  background: #e4e4e8;
}

.advanced svg {
  width: 9px;
  height: 9px;
}

.advanced::after {
  content: "";
  flex: 1;
  align-self: flex-end;
  height: 4px;
  border-top: 1px solid #999;
}

.advanced h3 {
  font-size: 12px;
}

.actions {
  display: grid;
  grid-template-columns: 71px 1fr 71px;
  column-gap: 7px;
  row-gap: 3px;
}

.actions button {
  height: 22px;
  border: 1px solid #b3b3ba;
  border-right-color: #66666e;
  border-bottom-color: #66666e;
  background: linear-gradient(#fff, #dcdce2);
}

.actions .with-icon {
  justify-content: space-between;
  justify-self: end;
  width: 71px;
  padding: 0 12px 0 1px;
}

.actions svg {
  width: 15px;
  height: 15px;
}

.clean {
  grid-column: 1 / 3;
}

.clean input {
  appearance: none;
  width: 12px;
  height: 12px;
  border: 1px solid #3a4860;
  background: #fff;
}

.undo {
  grid-column: 3;
  color: #777;
}

.reset {
  grid-column: 1;
}

/* Splitter and right column */
.splitter {
  display: flex;
  align-items: center;
  flex: none;
  width: 7px;
  padding-left: 1px;
}

.splitter svg {
  width: 5px;
  height: 8px;
}

.main {
  flex: 1;
  display: flex;
  flex-direction: column;
  min-width: 0;
}

.viewport {
  flex: 1;
  position: relative;
  min-height: 0;
  margin: 0 3px 0 2px;
  border: 3px solid #34c93c;
  outline: 1px solid #8a6c90;
  background: #15233b;
}

.scene {
  position: absolute;
  width: 100%;
  height: 100%;
}

.wire {
  fill: none;
  stroke: #38c9ab;
}

.origin, .axis-x {
  fill: #e01818;
  stroke: #e01818;
}

.axis-x, .axis-y, .axis-z {
  stroke-width: 2;
}

.axis-y {
  fill: #2be02b;
  stroke: #2be02b;
}

.axis-z {
  fill: #1010e8;
  stroke: #1010e8;
}

.axis-hub {
  fill: #ffe34a;
}

.axis-label {
  font-size: 10px;
  font-weight: bold;
  fill: #2be02b;
}

.dial {
  fill: none;
  stroke: #23324a;
}

.view-buttons {
  position: absolute;
  top: 3px;
  right: 1px;
  display: flex;
  gap: 4px;
}

.view-buttons svg {
  width: 12px;
  height: 12px;
}

.view-name {
  position: absolute;
  right: 7px;
  bottom: 2px;
  font: 9px/12px "Liberation Sans", sans-serif;
  color: #fff;
}

.context-menu {
  position: absolute;
  left: 127px;
  top: 65px;
  width: 97px;
  padding: 1px;
  border: 1px solid #c8ccd6;
  background: #f7f8fc;
}

.context-menu button {
  width: 100%;
  height: 18px;
  gap: 6px;
  padding: 0 3px 0 1px;
}

.context-menu span {
  flex: 1;
  text-align: left;
}

.context-menu svg {
  width: 15px;
  height: 15px;
}

.context-menu i {
  border-left: 5px solid #14204a;
  border-top: 4px solid transparent;
  border-bottom: 4px solid transparent;
}

.context-menu .highlight {
  background: #3391ee;
  color: #fff;
}

.context-menu .highlight i {
  border-left-color: #fff;
}

.dark-pointer svg {
  color: #444;
}

.submenu {
  left: 223px;
  width: 200px;
}

.submenu button {
  padding-right: 13px;
}

kbd {
  font: inherit;
}

.cursor {
  position: absolute;
  left: 158px;
  top: 79px;
  width: 12px;
  height: 18px;
}

/* Consoles */
.docks {
  display: flex;
  height: 76px;
  padding: 11px 2px 0 0;
}

.dock-side {
  display: flex;
  flex-direction: column;
  align-items: center;
  gap: 6px;
  width: 16px;
  padding-top: 6px;
}

.dock-side svg {
  width: 10px;
  height: 10px;
}

.console {
  display: flex;
  flex: none;
  width: 493px;
  border: 1px solid #7890b8;
  background: #fbfbff;
}

.dock-tab {
  display: flex;
  flex-direction: column;
  align-items: center;
  justify-content: space-between;
  flex: none;
  width: 22px;
  padding-bottom: 6px;
  background: linear-gradient(90deg, #dfe9fb, #b9cdf1);
}

.dock-tab span {
  writing-mode: vertical-rl;
  transform: rotate(180deg);
}

.dock-tab i {
  width: 9px;
  height: 9px;
  border: 1px solid #2c3d68;
  background: linear-gradient(90deg, transparent 3px, #2c3d68 3px, #2c3d68 4px, transparent 4px);
}

.dock-tab b {
  padding-top: 9px;
}

.console-main {
  flex: 1;
  display: flex;
  flex-direction: column;
  min-width: 0;
}

.console-log {
  flex: 1;
  min-height: 0;
  overflow: hidden;
  font: 12px/15px "Liberation Sans", sans-serif;
  color: #111;
}

.console-log p {
  white-space: pre;
}

.indent {
  padding-left: 94px;
}

.first {
  margin-top: -10px;
}

.first span {
  padding-right: 28px;
}

mark {
  background: #2f87e4;
  color: #fff;
}

.hscroll {
  display: flex;
  height: 14px;
  background: #f5f3f2;
}

.hscroll button,
.vscroll button {
  width: 14px;
  height: 14px;
  background: linear-gradient(#e4ecfb, #c4d4f2);
}

.hscroll svg,
.vscroll svg {
  width: 7px;
  height: 7px;
}

.left svg { transform: rotate(90deg); }
.right svg { transform: rotate(-90deg); }
.up svg { transform: rotate(180deg); }

.thumb {
  width: 61%;
  margin-right: auto;
  border: 1px solid #a8bce2;
  background: linear-gradient(#d4e1fa, #b4c9f0);
}

.vscroll {
  display: flex;
  flex-direction: column;
  justify-content: space-between;
  flex: none;
  width: 15px;
  padding: 1px 0;
  background: #eef1fa;
}

.console .vscroll {
  padding-bottom: 18px;
}

.command {
  flex: 1;
  display: flex;
  min-width: 0;
  margin-left: 6px;
  border: 1px solid #7890b8;
  border-top-color: #333;
  border-right: none;
}

.command-main {
  flex: 1;
  display: flex;
  flex-direction: column;
  min-width: 0;
  border-left: 2px solid #555;
}

.command-log {
  flex: 1;
  display: flex;
  justify-content: space-between;
  border-bottom: 1px solid #aab;
  background: #f8f8fe;
}

.command-log p {
  padding-top: 2px;
  font: 11px/12px "Liberation Sans", sans-serif;
  color: #111;
}

.command-log .vscroll {
  padding-bottom: 8px;
}

.command-line {
  display: flex;
  height: 22px;
  background: #fff;
}

.command-line input {
  flex: 1;
}

.command-line .pick {
  height: 20px;
}

.status {
  display: flex;
  height: 17px;
  padding-top: 1px;
  background: #f9faff;
  color: #111;
}

.status span {
  width: 30%;
  padding-left: 1px;
  border-top: 1px solid #777;
  border-left: 1px solid #777;
}

.status span:first-child {
  width: 70%;
}
```
